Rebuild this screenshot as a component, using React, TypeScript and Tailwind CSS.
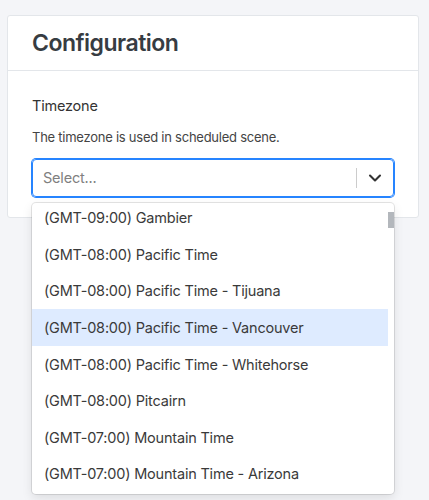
import { ChevronDown } from "lucide-react";

const options = [
  "(GMT-09:00) Gambier",
  "(GMT-08:00) Pacific Time",
  "(GMT-08:00) Pacific Time - Tijuana",
  "(GMT-08:00) Pacific Time - Vancouver",
  "(GMT-08:00) Pacific Time - Whitehorse",
  "(GMT-08:00) Pitcairn",
  "(GMT-07:00) Mountain Time",
  "(GMT-07:00) Mountain Time - Arizona",
];

export default function App() {
  return (
    <div
      className="min-h-[500px] bg-[#f4f5f8] pt-[15px] pl-[7px] pr-[10px] text-[#333]"
      style={{ fontFamily: "Inter, 'Noto Sans', sans-serif" }}
    >
      <div className="rounded-[3px] border border-[#e3e6ea] bg-white">
        <div className="flex h-[55px] items-center border-b border-[#e3e6ea] px-6">
          <h1 className="text-[23px] font-semibold tracking-[-0.5px] text-[#373c42]">Configuration</h1>
        </div>
        <div className="px-6 pt-[25px] pb-[20px]">
          <div className="text-[14.5px] leading-[20px] tracking-[-0.2px] text-[#333]">Timezone</div>
          <p className="mt-[12px] text-[13px] leading-[18px] tracking-[-0.25px] text-[#444]">
            The timezone is used in scheduled scene.
          </p>
          <div className="relative mt-[13px]">
            <div className="flex h-[38px] items-center rounded-[4px] border border-[#2684ff] shadow-[0_0_0_1px_#2684ff]">
              <div className="flex-1 pl-[10px] text-[14.5px] tracking-[-0.2px] text-[#808080]">Select...</div>
              <span className="h-[20px] w-px bg-[#ccc]" />
              <div className="flex w-[36px] justify-center text-[#333]">
                <ChevronDown size={20} strokeWidth={2.5} />
              </div>
            </div>
            <div className="absolute left-0 right-0 top-[44px] z-10 h-[291px] overflow-hidden rounded-[4px] bg-white shadow-[0_0_0_1px_rgba(0,0,0,0.1),0_4px_11px_rgba(0,0,0,0.1)]">
              <div className="-mt-[3.3px] mr-[6px]">
                {options.map((o, i) => (
                  <div
                    key={o}
                    className={
                      "flex h-[36.6px] items-center px-3 text-[14.5px] tracking-[-0.2px] text-[#3a3a3a] " +
                      (i === 3 ? "bg-[#deebff]" : "")
                    }
                  >
                    {o}
                  </div>
                ))}
              </div>
              <div className="absolute right-0 top-[9px] h-[16px] w-[6px] bg-[#b3b7bc]" />
            </div>
          </div>
        </div>
      </div>
    </div>
  );
}
